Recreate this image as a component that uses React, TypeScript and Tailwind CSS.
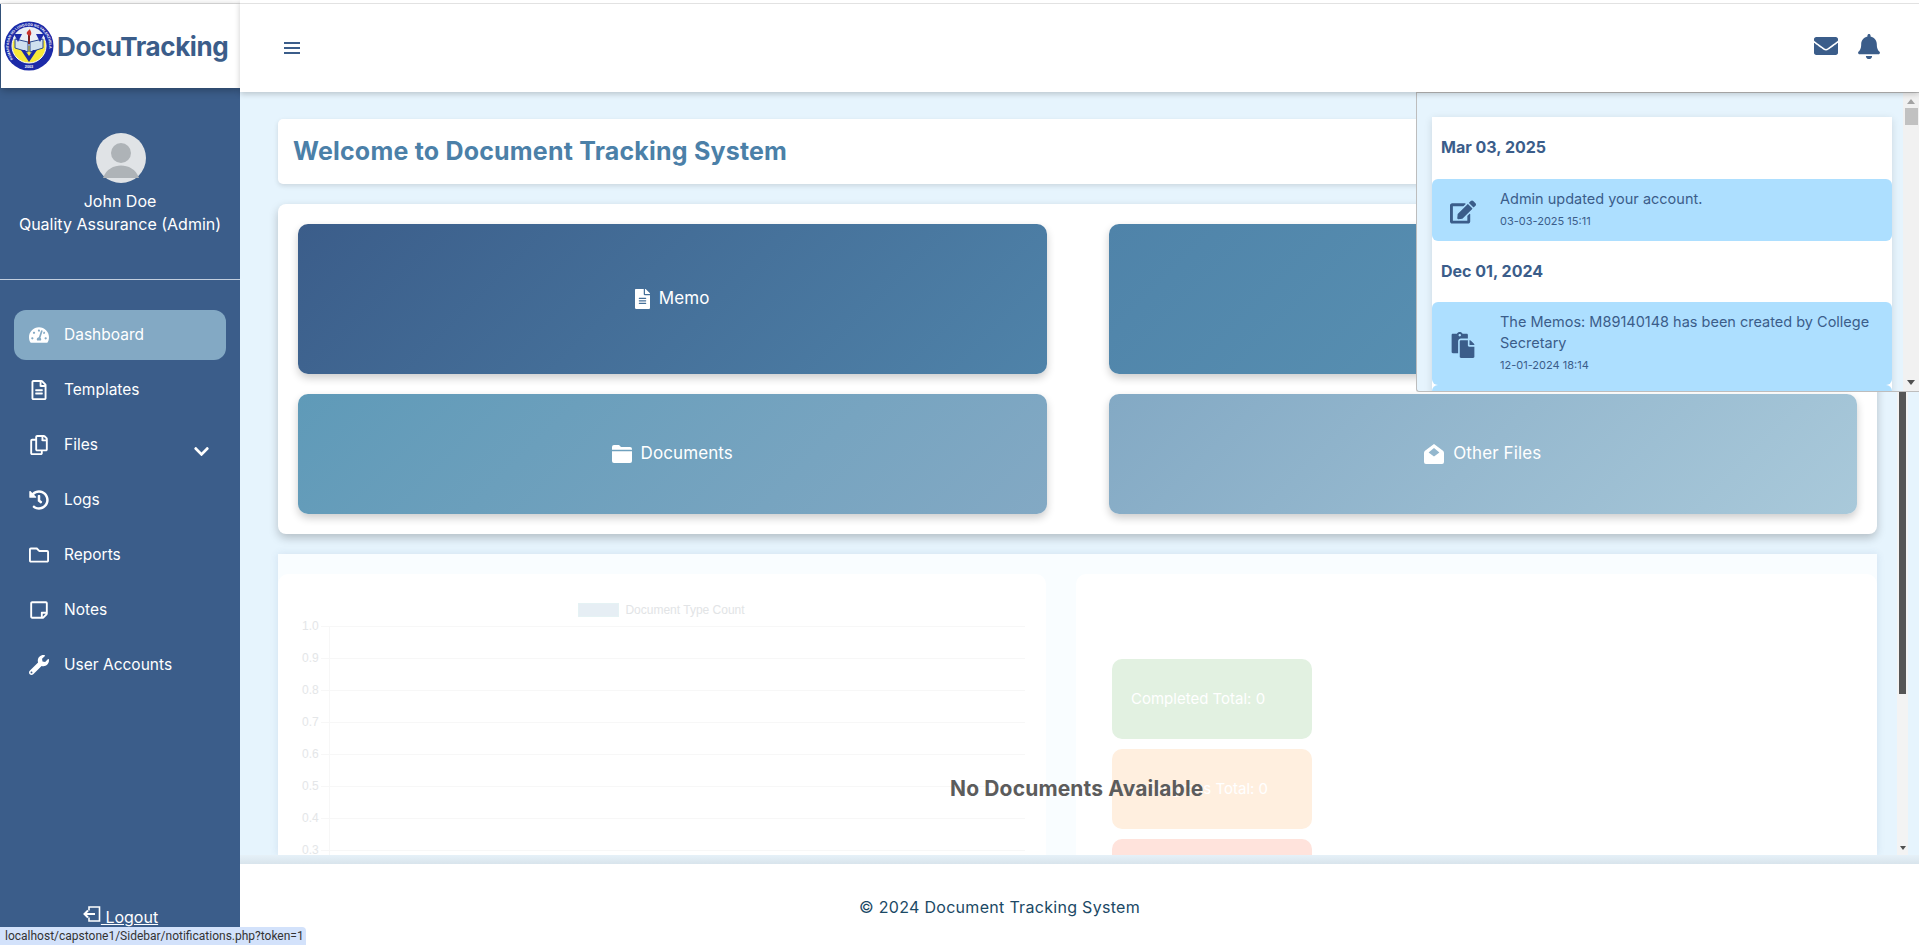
import type { ComponentType } from "react"
import { FaBell, FaChevronDown, FaEdit, FaEnvelope, FaFileAlt, FaHistory, FaPaste, FaRegCopy, FaRegFileAlt, FaRegFolder, FaRegStickyNote, FaTachometerAlt, FaWrench } from "react-icons/fa"

type IconType = ComponentType<{ className?: string }>

const navItems = [
  { label: "Dashboard", icon: FaTachometerAlt, active: true },
  { label: "Templates", icon: FaRegFileAlt },
  { label: "Files", icon: FaRegCopy, chevron: true },
  { label: "Logs", icon: FaHistory },
  { label: "Reports", icon: FaRegFolder },
  { label: "Notes", icon: FaRegStickyNote },
  { label: "User Accounts", icon: FaWrench },
]

const ticks = ["1.0", "0.9", "0.8", "0.7", "0.6", "0.5", "0.4", "0.3"]

function FolderIcon({ className }: { className?: string }) {
  return (
    <svg viewBox="0 0 20 18" fill="currentColor" className={className}>
      <path d="M0 2a2 2 0 0 1 2-2h5l2 2h9a2 2 0 0 1 2 2v.8H0z" />
      <path d="M0 6.2h20V16a2 2 0 0 1-2 2H2a2 2 0 0 1-2-2z" />
    </svg>
  )
}

function OpenMailIcon({ className }: { className?: string }) {
  return (
    <svg viewBox="0 0 20 20" fill="currentColor" className={className}>
      <path fillRule="evenodd" d="M10 0 19 6.8Q20 7.6 20 9V18a2 2 0 0 1-2 2H2a2 2 0 0 1-2-2V9Q0 7.6 1 6.8ZM10 4 4.6 8.4 10 12.4 15.4 8.4Z" />
    </svg>
  )
}

function TopLine() {
  return <div className="h-[4px] shrink-0 bg-white border-b border-[#e2e2e2]" />
}

function Seal() {
  return (
    <svg viewBox="0 0 50 50" className="w-[50px] h-[50px] shrink-0">
      <defs>
        <path id="ring" d="M10.65 39.35A20.3 20.3 0 1 1 39.35 39.35" />
      </defs>
      <circle cx="25" cy="25" r="24.5" fill="#1c2aa8" />
      <text fill="#ffffff" fontSize="3.5" fontWeight="700" fontFamily="'Liberation Sans',sans-serif">
        <textPath href="#ring" startOffset="2">PAMANTASAN NG LUNGSOD NG VALENZUELA</textPath>
      </text>
      <text x="25" y="47" textAnchor="middle" fill="#ffffff" fontSize="3.8" fontWeight="700" fontFamily="'Liberation Sans',sans-serif">2003</text>
      <circle cx="25" cy="25" r="17" fill="#f7e93a" stroke="#ffffff" strokeWidth="1" />
      <path d="M9 17A17 17 0 0 1 41 17L36 25H14Z" fill="#e9eef5" />
      <path d="M11 18 24 21V31L11 27Z" fill="#cfe0ef" stroke="#2c4a8f" strokeWidth="1" />
      <path d="M39 18 26 21V31L39 27Z" fill="#cfe0ef" stroke="#2c4a8f" strokeWidth="1" />
      <path d="M17 29 25 41 33 29H29L25 35 21 29Z" fill="#1c2aa8" />
      <path d="M10 13 14 21 18 13ZM32 13 36 21 40 13Z" fill="#1c2aa8" />
      <path d="M25 11V23" stroke="#7a1f1f" strokeWidth="2" />
      <path d="M24 14C21 12 24 10 26 8 26 10 29 12 26 15Z" fill="#c8322c" />
    </svg>
  )
}

function Sidebar() {
  return (
    <aside className="w-[240px] shrink-0 h-full flex flex-col bg-[#3b5d8a] text-white">
      <TopLine />
      <div className="h-[84px] shrink-0 ml-px bg-white flex items-center pl-[3px] gap-[3px] shadow-[0_2px_8px_rgba(0,0,0,0.3)]">
        <Seal />
        <span className="text-[26px] font-bold tracking-[-0.4px] text-[#3b5d8a]">DocuTracking</span>
      </div>
      <div className="h-[192px] shrink-0 border-b border-[#c2cede] flex flex-col items-center pt-[45px]">
        <svg viewBox="0 0 50 50" className="w-[50px] h-[50px] ml-px">
          <circle cx="25" cy="25" r="25" fill="#e0e3e6" />
          <circle cx="25" cy="20" r="10" fill="#aeb3b7" />
          <path d="M7 45C10 36 18 32.500 25 32.500S40 36 43 45Z" fill="#aeb3b7" />
        </svg>
        <div className="text-[16px] leading-[23px] mt-[7px]">John Doe</div>
        <div className="text-[16px] leading-[23px] whitespace-nowrap">Quality Assurance (Admin)</div>
      </div>
      <nav className="flex flex-col px-[14px] pt-[30px] gap-[5px]">
        {navItems.map((item) => (
          <div
            key={item.label}
            className={`h-[50px] flex items-center pl-[15px] rounded-[12px] text-[15.5px] ${item.active ? "bg-[#83a9c4]" : ""}`}
          >
            <item.icon className="w-[20px] h-[20px] shrink-0" />
            <span className="ml-[15px]">{item.label}</span>
            {item.chevron && <FaChevronDown className="w-[17px] h-[17px] ml-auto mr-[16px] mt-[12px]" />}
          </div>
        ))}
      </nav>
      <div className="mt-auto pb-[19px] flex justify-center pl-[1px] text-[16px] leading-[18px]">
        <span className="flex items-end underline underline-offset-[1px]">
          <svg viewBox="0 0 18 17" className="w-[18px] h-[17px] mb-[3px]" fill="none" stroke="#ffffff" strokeWidth="1.6">
            <path d="M6 4.500V1h10.500v14H6v-3.500" />
            <path d="M12 8H2M5 4.500 1.500 8 5 11.500" strokeWidth="2" />
          </svg>
          <span>&nbsp;Logout</span>
        </span>
      </div>
    </aside>
  )
}

function ActionTile({ label, icon: Icon, gradient, height, iconClass }: { label: string; icon: IconType; gradient: string; height: string; iconClass: string }) {
  return (
    <div className={`${gradient} ${height} rounded-[10px] shadow-[0_4px_8px_rgba(0,0,0,0.2)] flex items-center justify-center gap-[9px] text-white text-[17px] tracking-[0.1px]`}>
      <Icon className={iconClass} />
      <span>{label}</span>
    </div>
  )
}

function Notification({ icon: Icon, lines, time, height }: { icon: IconType; lines: string[]; time: string; height: string }) {
  return (
    <div className={`${height} bg-[#addfff] rounded-[6px] flex text-[#3b5d8a]`}>
      <Icon className="w-[26px] h-[26px] ml-[18px] shrink-0 self-center mt-[3px]" />
      <div className="ml-[24px] pt-[9px]">
        {lines.map((line) => (
          <div key={line} className="text-[14.500px] leading-[21px] whitespace-nowrap">{line}</div>
        ))}
        <div className="text-[11px] leading-[16px] mt-[4px]">{time}</div>
      </div>
    </div>
  )
}

function NotificationsPopup() {
  return (
    <div className="absolute top-[92px] left-[1416px] w-[503px] h-[300px] border-l border-t border-b border-[#bdbdbd] rounded-bl-[3px] bg-[#e6f4fd] flex overflow-hidden">
      <div className="flex-1 pl-[15px] pr-[11px] pt-[24px]">
        <div className="bg-white shadow-[0_2px_8px_rgba(0,0,0,0.12)] h-[400px]">
          <div className="h-[62px] flex items-center pl-[9px] pb-[2px] text-[16px] font-bold text-[#3b5d8a]">Mar 03, 2025</div>
          <Notification icon={FaEdit} lines={["Admin updated your account."]} time="03-03-2025 15:11" height="h-[62px]" />
          <div className="h-[61px] flex items-center pl-[9px] pb-[2px] text-[16px] font-bold text-[#3b5d8a]">Dec 01, 2024</div>
          <Notification icon={FaPaste} lines={["The Memos: M89140148 has been created by College", "Secretary"]} time="12-01-2024 18:14" height="h-[83px]" />
          <div className="h-[40px] bg-[#addfff] rounded-[6px]" />
        </div>
      </div>
      <div className="w-[16px] shrink-0 bg-[#f1f1f1] flex flex-col items-center">
        <div className="mt-[6px] w-0 h-0 border-x-[4px] border-b-[5px] border-x-transparent border-b-[#a3a3a3]" />
        <div className="mt-[4px] w-[13px] h-[17px] bg-[#c1c1c1]" />
        <div className="mt-auto mb-[6px] w-0 h-0 border-x-[4px] border-t-[5px] border-x-transparent border-t-[#505050]" />
      </div>
    </div>
  )
}

function ChartPanel() {
  return (
    <div className="w-[768px] shrink-0 bg-white rounded-t-[10px] pt-[29px] pl-[24px] pr-[21px] text-[#e4e6e8] font-['Liberation_Sans',sans-serif] text-[12px]">
      <div className="flex items-center justify-center gap-[6px] h-[14px] pr-[4px]">
        <div className="w-[41px] h-[14px] bg-[#e6eef4] border border-[#e5f2f4]" />
        <span className="text-[#e2e4e6]">Document Type Count</span>
      </div>
      <div className="mt-[9px] flex flex-col">
        {ticks.map((tick) => (
          <div key={tick} className="h-[32px] flex items-start">
            <span className="w-[19px] leading-[12px] -mt-[6px]">{tick}</span>
            <div className="flex-1 h-[32px] border-t border-[#f7f7f7]">
              <div className="h-full ml-[8px] border-l border-[#f7f7f7]" />
            </div>
          </div>
        ))}
      </div>
    </div>
  )
}

function StatTile({ label, color }: { label: string; color: string }) {
  return (
    <div className={`${color} h-[80px] w-[200px] shrink-0 rounded-[10px] flex items-center pl-[19px] text-white text-[15px]`}>
      {label}
    </div>
  )
}

function MainScrollbar() {
  return (
    <div className="w-[11px] shrink-0 bg-[#f3f3f3] mr-[11px] flex flex-col items-center">
      <div className="h-[602px] w-[7px] bg-[#555555]" />
      <div className="mt-auto mb-[5px] w-0 h-0 border-x-[3px] border-t-[4px] border-x-transparent border-t-[#505050]" />
    </div>
  )
}

function MainContent() {
  return (
    <main className="flex-1 min-h-0 flex flex-col bg-[#e6f4fd] overflow-hidden">
      <div className="flex-1 min-h-0 flex">
        <div className="flex-1 pl-[38px] pr-[20px] pt-[27px] flex flex-col overflow-hidden">
          <div className="h-[65px] shrink-0 bg-white rounded-[5px] shadow-[0_2px_5px_rgba(0,0,0,0.12)] flex items-center pl-[15px]">
            <h1 className="text-[25px] font-bold tracking-[0.2px] mt-px text-[#4b80a8]">Welcome to Document Tracking System</h1>
          </div>
          <div className="mt-[20px] h-[330px] shrink-0 bg-white rounded-[8px] shadow-[0_4px_10px_rgba(0,0,0,0.22)] p-[20px] grid grid-cols-2 gap-x-[62px] gap-y-[20px] content-start">
            <ActionTile label="Memo" icon={FaFileAlt} gradient="bg-[linear-gradient(135deg,#3b5d8a,#4f83a9)]" height="h-[150px]" iconClass="w-[15px] h-[20px]" />
            <ActionTile label="Files" icon={FaRegCopy} gradient="bg-[linear-gradient(135deg,#4f83a9,#5f9ab8)]" height="h-[150px]" iconClass="w-[16px] h-[20px]" />
            <ActionTile label="Documents" icon={FolderIcon} gradient="bg-[linear-gradient(135deg,#5f9ab8,#83a9c4)]" height="h-[120px]" iconClass="w-[20px] h-[18px]" />
            <ActionTile label="Other Files" icon={OpenMailIcon} gradient="bg-[linear-gradient(135deg,#83a9c4,#a9c9da)]" height="h-[120px]" iconClass="w-[20px] h-[20px]" />
          </div>
          <div className="mt-[20px] flex-1 min-h-0 bg-[#f9fdff] pt-[20px] flex gap-[30px] shadow-[0_0_8px_rgba(59,93,138,0.12)]">
            <ChartPanel />
            <div className="flex-1 bg-white rounded-t-[10px] pt-[85px] pl-[36px] flex flex-col gap-[10px]">
              <StatTile label="Completed Total: 0" color="bg-[#e2f1e1]" />
              <StatTile label="In Progress Total: 0" color="bg-[#ffefdf]" />
              <StatTile label="Pending Total: 0" color="bg-[#ffe3dc]" />
            </div>
          </div>
        </div>
        <MainScrollbar />
      </div>
      <div className="h-[9px] shrink-0 bg-gradient-to-b from-[#e6f1f8] to-[#d8e4ec]" />
    </main>
  )
}

export default function App() {
  return (
    <div className="relative w-[1919px] h-[945px] flex overflow-hidden bg-white font-['Inter',sans-serif]">
      <Sidebar />
      <div className="flex-1 min-w-0 flex flex-col">
        <header className="h-[92px] shrink-0 bg-white shadow-[0_2px_6px_rgba(0,0,0,0.2)] z-10 flex flex-col text-[#3b5d8a]">
          <TopLine />
          <div className="flex-1 flex items-center pl-[44px] pr-[39px]">
            <svg viewBox="0 0 16 12" className="w-[16px] h-[12px]" fill="currentColor">
              <rect y="0" width="16" height="2" />
              <rect y="5" width="16" height="2" />
              <rect y="10" width="16" height="2" />
            </svg>
            <FaEnvelope className="ml-auto w-[24px] h-[24px] -mt-[4px]" />
            <FaBell className="ml-[20px] w-[22px] h-[25px] -mt-[4px]" />
          </div>
        </header>
        <MainContent />
        <footer className="h-[81px] shrink-0 bg-white flex items-center justify-center pr-[160px] pt-[4px] text-[16px] tracking-[0.3px] text-[#1b4965]">
          © 2024 Document Tracking System
        </footer>
      </div>
      <NotificationsPopup />
      <div className="absolute left-[950px] top-[776px] text-[21px] font-bold leading-[26px] tracking-[0.15px] text-[#5c5c5c]">
        No Documents Available
      </div>
      <div className="absolute left-0 bottom-0 w-[306px] h-[18px] bg-[#d3e2fb] rounded-tr-[4px] pl-[5px] font-['Roboto',sans-serif] text-[12px] leading-[18px] whitespace-nowrap text-[#333333]">
        localhost/capstone1/Sidebar/notifications.php?token=1
      </div>
    </div>
  )
}
